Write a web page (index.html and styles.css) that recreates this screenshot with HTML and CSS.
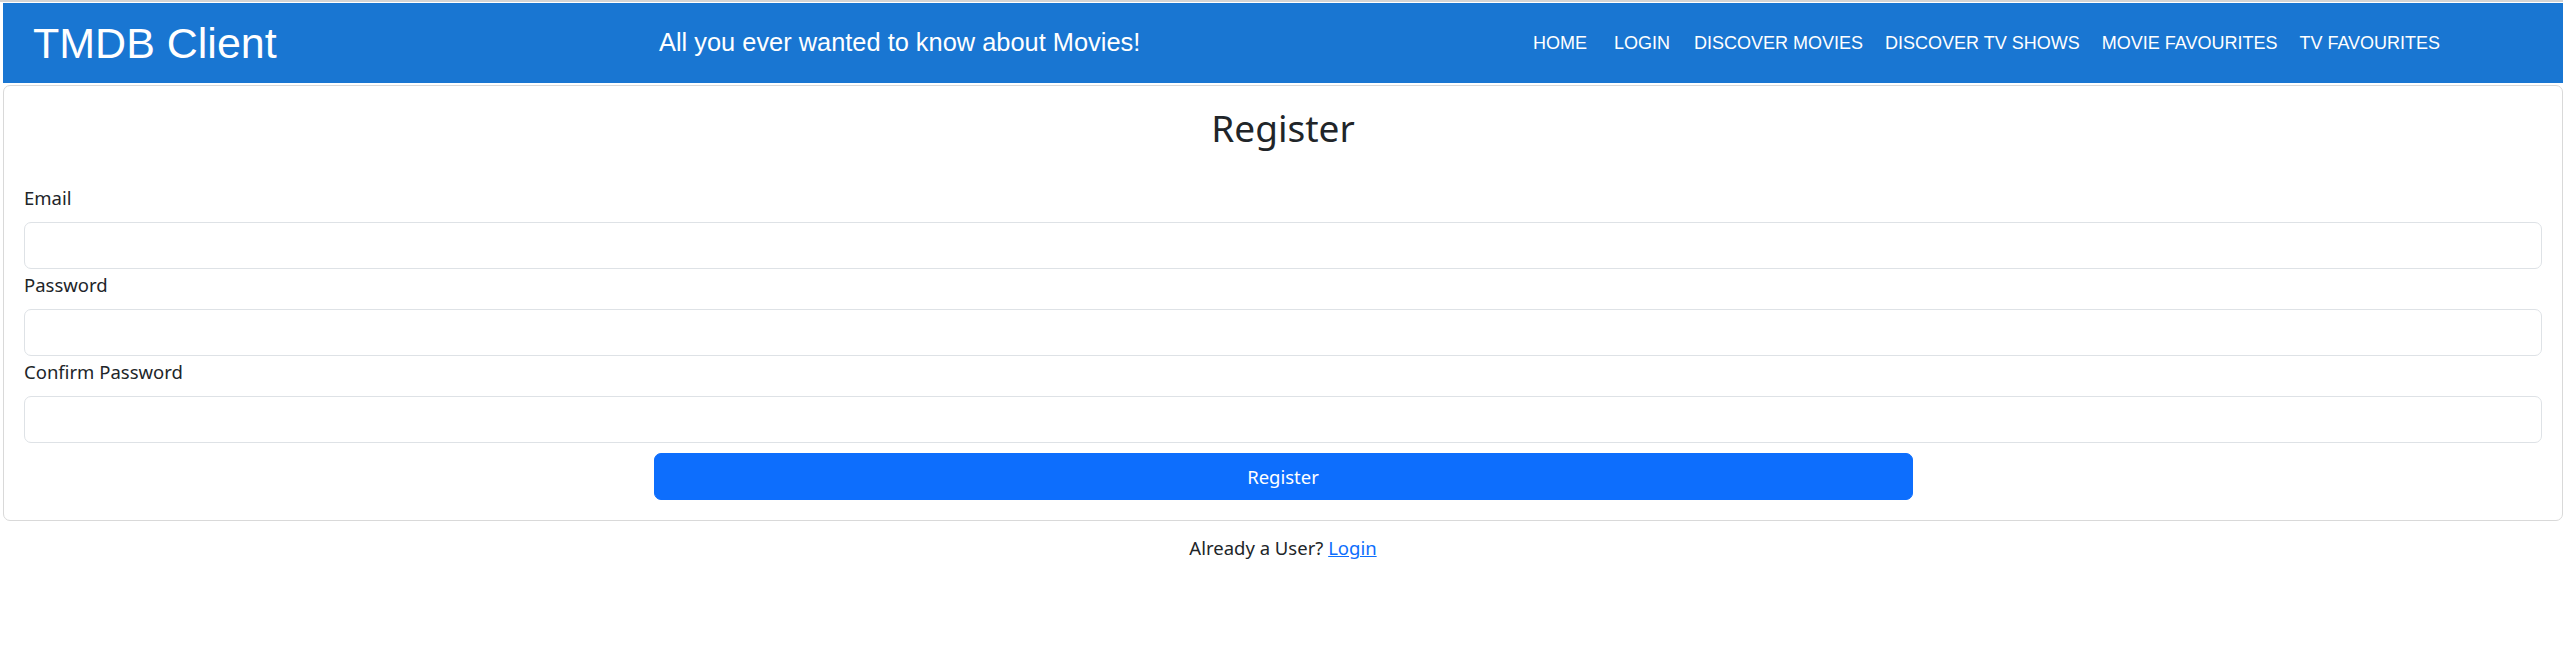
FILE: index.html
```html
<!DOCTYPE html>
<html lang="en">
<head>
<meta charset="utf-8">
<title>TMDB Client - Register</title>
<link rel="stylesheet" href="styles.css">
</head>
<body>
  <header class="appbar">
    <div class="brand">TMDB Client</div>
    <div class="tagline">All you ever wanted to know about Movies!</div>
    <nav class="nav">
      <a class="nav-btn" href="#">Home</a>
      <a class="nav-btn" href="#">Login</a>
      <a class="nav-btn" href="#">Discover Movies</a>
      <a class="nav-btn" href="#">Discover TV Shows</a>
      <a class="nav-btn" href="#">Movie Favourites</a>
      <a class="nav-btn" href="#">TV Favourites</a>
    </nav>
  </header>

  <main class="card">
    <h2 class="card-title">Register</h2>
    <form class="form">
      <div class="field">
        <label class="form-label" for="email">Email</label>
        <input class="form-control" id="email" type="email">
      </div>
      <div class="field">
        <label class="form-label" for="password">Password</label>
        <input class="form-control" id="password" type="password">
      </div>
      <div class="field">
        <label class="form-label" for="confirm">Confirm Password</label>
        <input class="form-control" id="confirm" type="password">
      </div>
      <button class="btn-primary" type="button">Register</button>
    </form>
  </main>

  <p class="footer-note">Already a User? <a class="link" href="#">Login</a></p>
</body>
</html>
```

FILE: styles.css
```css
* {
  box-sizing: border-box;
}

html, body {
  background: #ffffff;
}

body {
  margin: 0;
  border-top: 2px solid #d4d4d4;
  padding: 1px 0 0 3px;
  font-family: "Noto Sans", "DejaVu Sans", sans-serif;
  font-size: 18.5px;
  line-height: 1.5;
  color: #212529;
}

.appbar {
  display: flex;
  align-items: center;
  height: 80px;
  padding-left: 30px;
  background: #1976d2;
  color: #ffffff;
  font-family: "Liberation Sans", Arial, sans-serif;
}

.brand {
  flex: 0 0 626px;
  font-size: 43px;
  line-height: 1;
}

.tagline {
  flex: 0 0 860px;
  font-size: 25.4px;
  line-height: 1;
}

.nav {
  display: flex;
  align-items: center;
  margin-top: 2px;
}

.nav-btn {
  min-width: 82px;
  padding: 6px 11px;
  text-align: center;
  color: #ffffff;
  text-decoration: none;
  text-transform: uppercase;
  font-size: 18px;
  line-height: 1.4;
  white-space: nowrap;
}

.card {
  display: block;
  margin-top: 2px;
  border: 1px solid #d9d9d9;
  border-radius: 7px;
  padding: 20px 20px 20px 20px;
}

.card-title {
  margin: 0 0 34px;
  text-align: center;
  font-size: 37px;
  font-weight: 400;
  line-height: 1.2;
}

.form {
  display: flex;
  flex-direction: column;
}

.field {
  display: flex;
  flex-direction: column;
  margin-bottom: 2px;
}

.form-label {
  display: block;
  margin-bottom: 11px;
  line-height: 27px;
}

.form-control {
  display: block;
  width: 100%;
  height: 47px;
  padding: 6px 13px;
  border: 1px solid #dee2e6;
  border-radius: 7px;
  background: #ffffff;
  font: inherit;
  color: #212529;
}

.btn-primary {
  align-self: center;
  width: 50%;
  height: 47px;
  margin-top: 8px;
  border: 1px solid #0d6efd;
  border-radius: 7px;
  background: #0d6efd;
  color: #ffffff;
  font: inherit;
  cursor: pointer;
}

.footer-note {
  margin: 13px 0 0;
  text-align: center;
  line-height: 27px;
}

.link {
  color: #0d6efd;
  text-decoration: underline;
}
```
